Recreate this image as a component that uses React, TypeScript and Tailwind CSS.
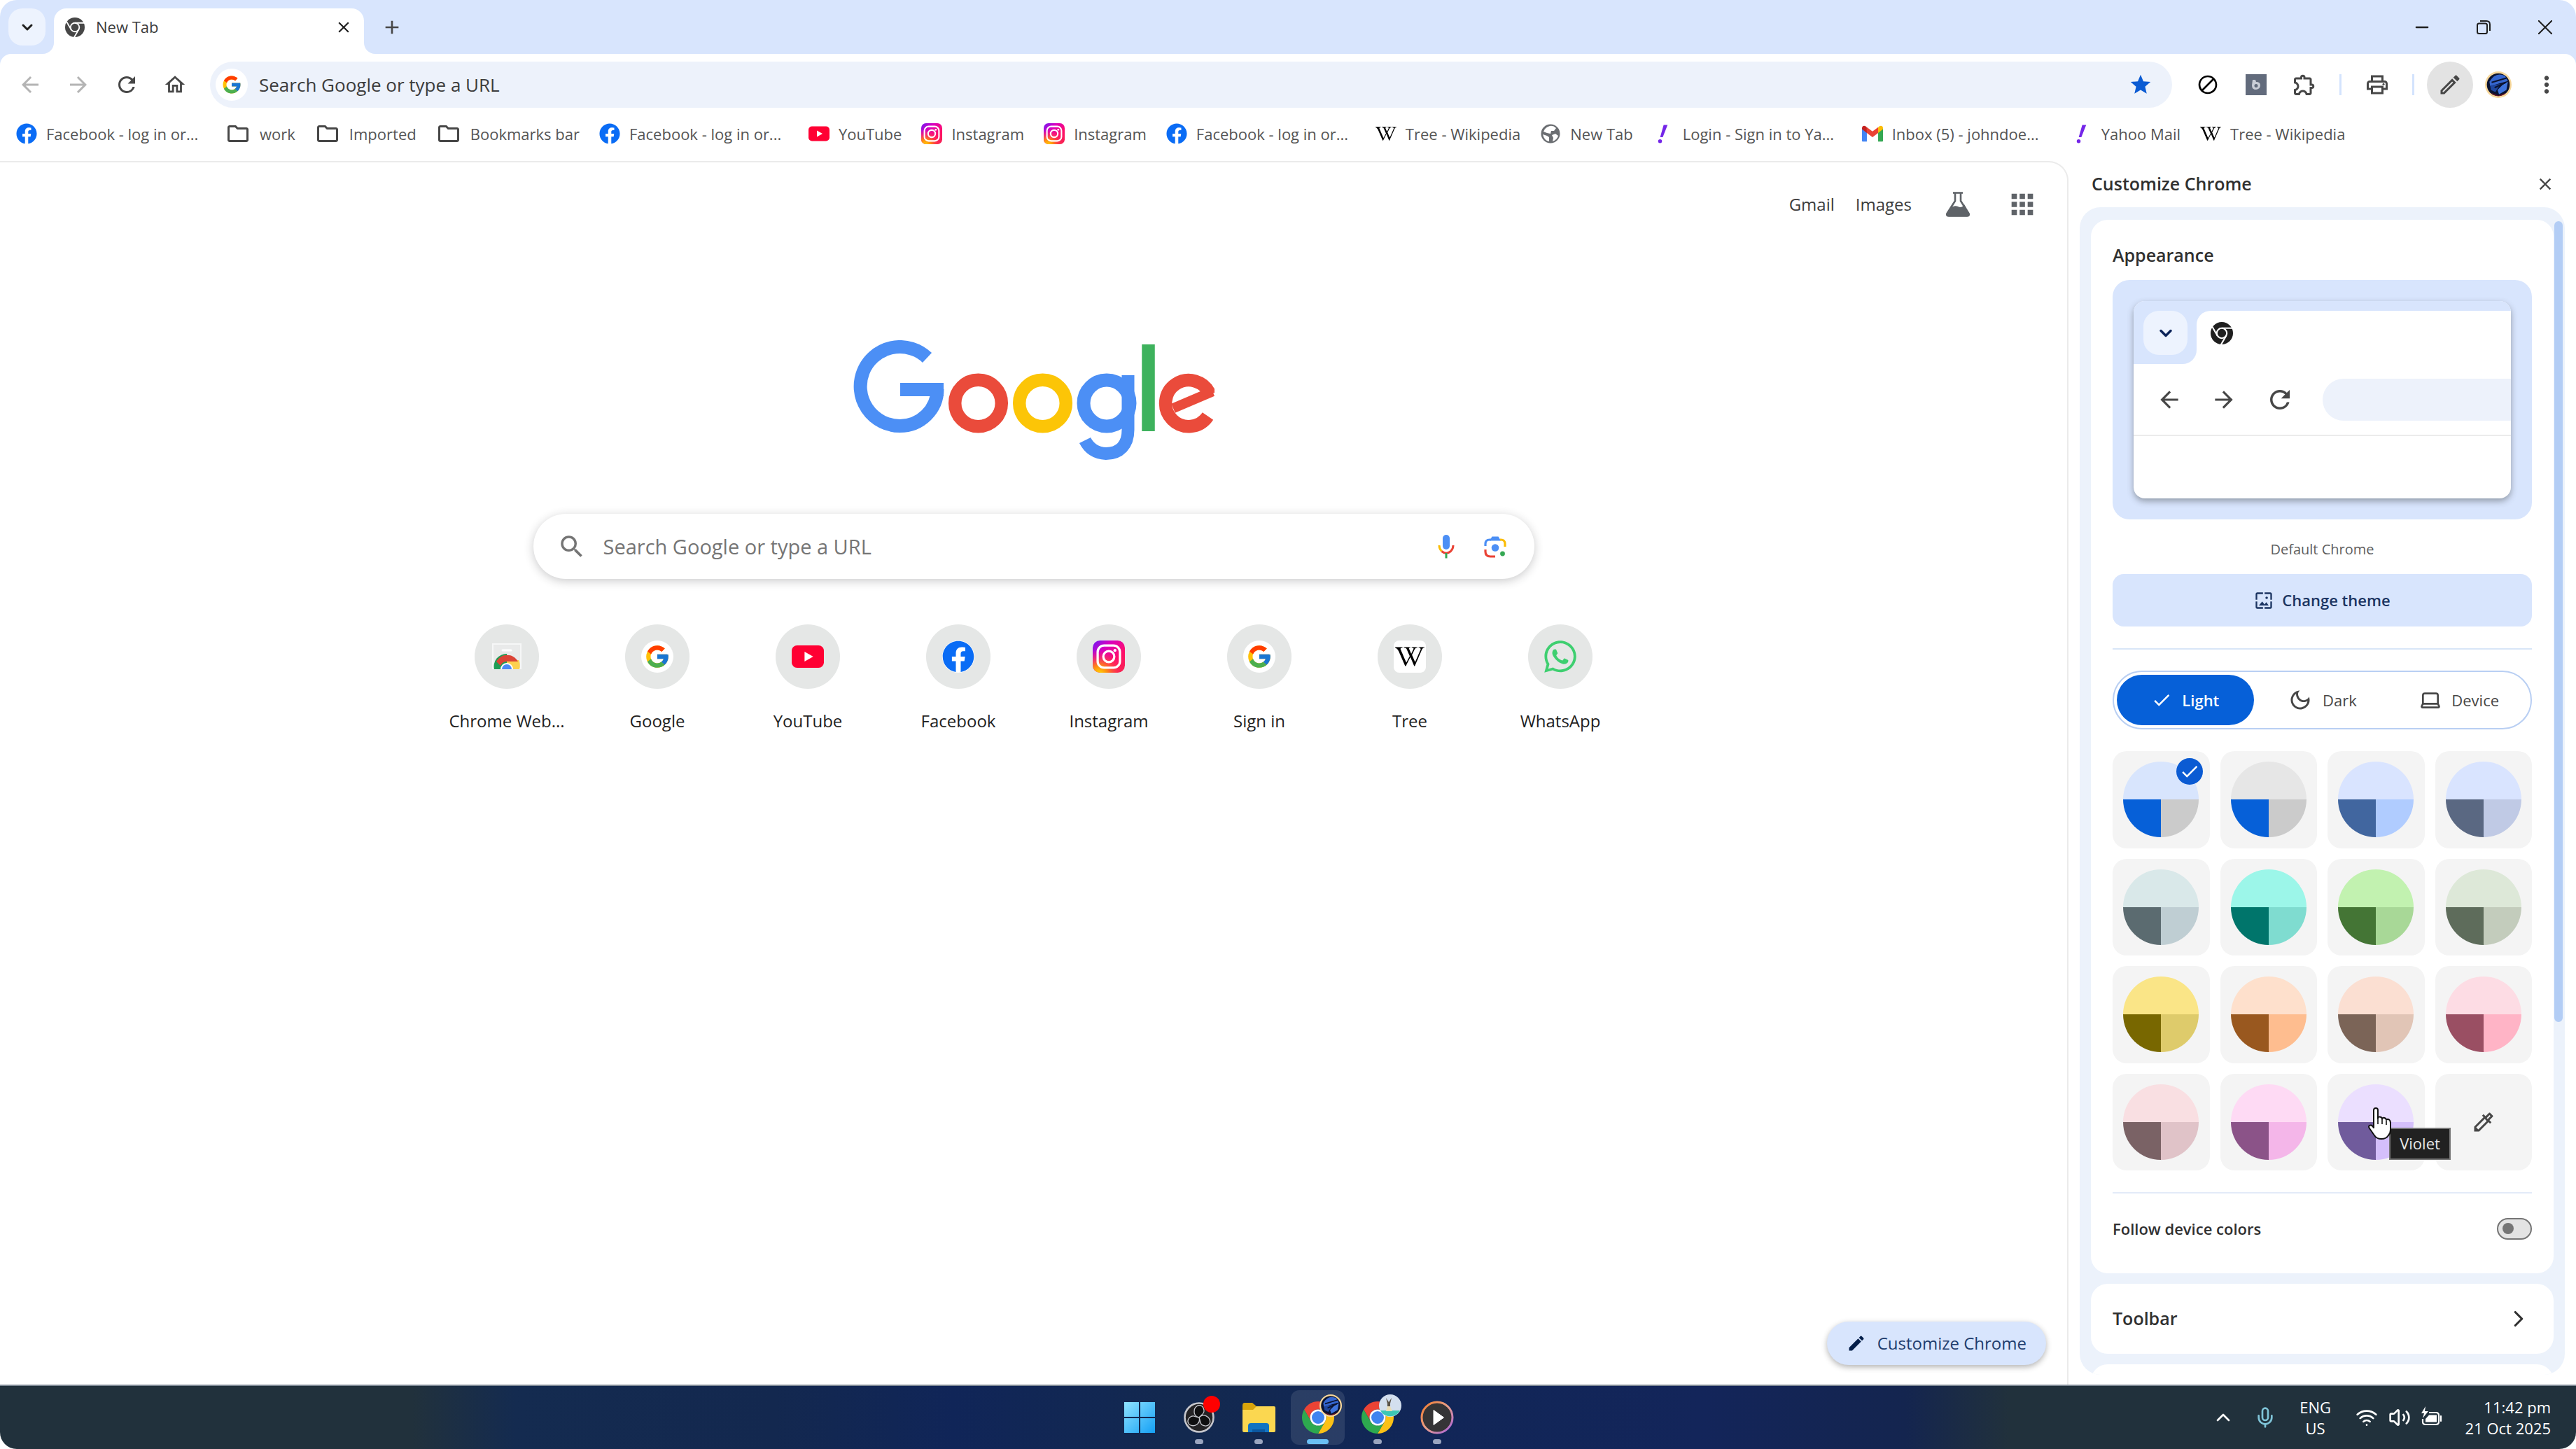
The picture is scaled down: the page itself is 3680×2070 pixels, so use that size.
import React, { useState } from 'react';
import { FcGoogle } from 'react-icons/fc';
import { FaFacebook, FaWhatsapp, FaWikipediaW } from 'react-icons/fa';
import {
  MdAdd,
  MdApps,
  MdArrowBack,
  MdArrowForward,
  MdBlock,
  MdCheck,
  MdClose,
  MdEdit,
  MdMoreVert,
  MdOutlineColorize,
  MdOutlineDarkMode,
  MdOutlineEdit,
  MdOutlineExtension,
  MdOutlineFolder,
  MdOutlineHome,
  MdOutlinePrint,
  MdOutlineWallpaper,
  MdRefresh,
  MdSearch,
  MdStar,
} from 'react-icons/md';
import { ChevronDown, ChevronRight, ChevronUp, Laptop, Mic, Minus, Volume2, Wifi } from 'lucide-react';

const ChromeMono = ({ className }: { className?: string }) => (
  <svg viewBox="0 0 24 24" className={className} fill="none">
    <circle cx="12" cy="12" r="12" fill="currentColor" />
    <g stroke="#fff" strokeWidth="1.6">
      <circle cx="12" cy="12" r="5.4" />
      <path d="M12 6.6H24" />
      <path d="M12 6.6H24" transform="rotate(120 12 12)" />
      <path d="M12 6.6H24" transform="rotate(240 12 12)" />
    </g>
  </svg>
);

const ChromeColor = ({ className }: { className?: string }) => (
  <svg viewBox="2 2 44 44" className={className}>
    <path d="M4.95 13A22 22 0 0 1 43.05 13L24 13A11 11 0 0 0 14.47 29.5Z" fill="#ea4335" />
    <path
      d="M4.95 13A22 22 0 0 1 43.05 13L24 13A11 11 0 0 0 14.47 29.5Z"
      fill="#fbc116"
      transform="rotate(120 24 24)"
    />
    <path
      d="M4.95 13A22 22 0 0 1 43.05 13L24 13A11 11 0 0 0 14.47 29.5Z"
      fill="#2da94f"
      transform="rotate(240 24 24)"
    />
    <circle cx="24" cy="24" r="11" fill="#fff" />
    <circle cx="24" cy="24" r="8.6" fill="#3f84f0" />
  </svg>
);

const InstagramLogo = ({ className }: { className?: string }) => (
  <svg viewBox="0 0 24 24" className={className} fill="none">
    <defs>
      <linearGradient id="ig-base" x1="0" y1="0" x2="1" y2="1">
        <stop offset="0" stopColor="#6a1cf5" />
        <stop offset="0.3" stopColor="#d800c0" />
        <stop offset="0.65" stopColor="#ff0f6b" />
        <stop offset="1" stopColor="#f5264f" />
      </linearGradient>
      <radialGradient id="ig-warm" cx="0.2" cy="1.05" r="0.75">
        <stop offset="0" stopColor="#ffdc00" />
        <stop offset="0.35" stopColor="#ff8a12" />
        <stop offset="1" stopColor="#ff2a55" stopOpacity="0" />
      </radialGradient>
    </defs>
    <rect width="24" height="24" rx="5.5" fill="url(#ig-base)" />
    <rect width="24" height="24" rx="5.5" fill="url(#ig-warm)" />
    <rect x="3.7" y="3.7" width="16.6" height="16.6" rx="4.8" stroke="#fff" strokeWidth="1.7" />
    <circle cx="12" cy="12" r="4.1" stroke="#fff" strokeWidth="1.7" />
    <circle cx="16.6" cy="7.4" r="1.1" fill="#fff" />
  </svg>
);

const YouTubeLogo = ({ className }: { className?: string }) => (
  <svg viewBox="0 0 30 30" className={className}>
    <rect y="4.5" width="30" height="21" rx="5" fill="#ff0033" />
    <path d="M12 10.5L20 15L12 19.5Z" fill="#fff" />
  </svg>
);

const GmailLogo = ({ className }: { className?: string }) => (
  <svg viewBox="0 0 28 28" className={className}>
    <path d="M0 7V23.5Q0 24.5 1 24.5H6.5V11Z" fill="#4285f4" />
    <path d="M28 7V23.5Q28 24.5 27 24.5H21.5V11Z" fill="#34a853" />
    <path d="M21.5 5.5V13L28 8V6.5C28 3.5 25 2.6 23 4.2Z" fill="#fbbc04" />
    <path d="M0 6.5C0 3.5 3 2.6 5 4.2L6.5 5.5V13L0 8Z" fill="#c5221f" />
    <path d="M6.5 5.4L14 11L21.5 5.4V13L14 18.6L6.5 13Z" fill="#ea4335" />
  </svg>
);

const YahooBang = ({ className }: { className?: string }) => (
  <svg viewBox="0 0 24 24" className={className} fill="#7426e8">
    <path d="M12.5 2H17L11.5 16H8.5Z" />
    <circle cx="8.4" cy="20.5" r="2.2" />
  </svg>
);

const Globe = ({ className }: { className?: string }) => (
  <svg viewBox="0 0 30 30" className={className}>
    <circle cx="15" cy="15" r="13.5" fill="#6b6e72" />
    <path d="M14 4Q19 3 23 7L20 11H16L15 15L10 14L5 12Q7 6 14 4Z" fill="#fff" />
    <path d="M4 16L10 18L13 20V26Q6 25 4 16Z" fill="#fff" />
    <path d="M17 17L22 15L26 18Q24 24 18 26L19 21Z" fill="#fff" />
  </svg>
);

const WebStoreLogo = ({ className }: { className?: string }) => (
  <svg viewBox="0 0 46 46" className={className} fill="none">
    <path d="M3 5H43V40H3Z" fill="#e9eaea" stroke="#f6f7f7" strokeWidth="2" />
    <path d="M17 14H29" stroke="#fff" strokeWidth="3" strokeLinecap="round" />
    <path d="M5 41A18 18 0 0 1 23 19V41Z" fill="#1f9d55" />
    <path d="M23 41V28H40A18 18 0 0 1 41 41Z" fill="#fcd14f" />
    <path d="M8 30A18 19 0 0 1 39 30H23A10 10 0 0 0 14 36Z" fill="#db4437" />
    <path d="M14 41A9 9 0 0 1 32 41Z" fill="#fff" />
    <path d="M16 41A7 7 0 0 1 30 41Z" fill="#4c8bf5" />
  </svg>
);

const GoogleLogo = () => (
  <svg viewBox="0 0 516 172" className="w-[516px] h-[172px]" fill="none" role="img" aria-label="Google">
    <g stroke="#4c8ff5" strokeWidth="19">
      <path d="M105.5 25A56.5 56.5 0 1 0 66.5 122.5A53.5 52.5 0 0 0 120 70" />
      <path d="M67 70.5H129" />
      <circle cx="362" cy="90" r="33" />
      <path d="M392.5 50V128C392.5 150 380 162 361 162Q340 161 331 143" strokeWidth="18" />
    </g>
    <circle cx="178.5" cy="90" r="33.3" stroke="#ea4b3b" strokeWidth="18.5" />
    <circle cx="270.5" cy="90" r="33.3" stroke="#fcc507" strokeWidth="18.5" />
    <path d="M421.5 6V130" stroke="#3eb25d" strokeWidth="18.5" />
    <path d="M457 97.3L513.3 73.3" stroke="#ea4b3b" strokeWidth="14" />
    <path d="M509.6 77.6A33 33 0 1 0 506.5 108.5" stroke="#ea4b3b" strokeWidth="18.5" />
  </svg>
);

const Flask = ({ className }: { className?: string }) => (
  <svg viewBox="0 0 36 36" className={className} fill="none" stroke="#5f6368" strokeWidth="2.6">
    <path d="M11 1.5H25" />
    <path d="M14 2V13L2.5 31Q1.5 34.5 5 34.5H31Q34.5 34.5 33.5 31L22 13V2" />
    <path d="M7 25Q13 20 18 22.5T27 20.5L33 31.5Q33.5 34 31 34H5Q2.5 34 3 31.5Z" fill="#5f6368" />
  </svg>
);

const MicColor = () => (
  <svg viewBox="0 0 24 34" className="w-6 h-[34px]" fill="none" strokeWidth="3">
    <rect x="7" y="0" width="10" height="21" rx="5" fill="#4c8ff5" />
    <path d="M2 15C2 19 3.5 21.5 5.5 23.5" stroke="#fbbc04" />
    <path d="M5.5 23.5C9.5 27 14.5 27 18.5 23.5C21 21 22 18.5 22 15" stroke="#ea4335" />
    <path d="M12 26V33.5" stroke="#34a853" />
  </svg>
);

const LensColor = () => (
  <svg viewBox="0 0 32 32" className="w-8 h-8" fill="none" strokeWidth="3.2">
    <path d="M2 15V12Q2 6 8 6H10" stroke="#4c8ff5" />
    <path d="M8 7.5L11.5 1.5H20.5L24 7.5Z" fill="#4c8ff5" />
    <path d="M23 6H24Q30 6 30 12V16" stroke="#fbbc04" />
    <path d="M2 20V23Q2 30 9 30H16" stroke="#ea4335" />
    <circle cx="16" cy="17.5" r="5.3" fill="#4c8ff5" />
    <circle cx="26.5" cy="26" r="3.4" fill="#34a853" />
  </svg>
);

const Helmet = ({ className }: { className?: string }) => (
  <svg viewBox="0 0 36 36" className={className} fill="none">
    <circle cx="18" cy="18" r="18" fill="#f7d79a" />
    <circle cx="18" cy="18" r="15.5" fill="#0b1330" />
    <path d="M6 14Q14 0 27 6L31 13L20 16L7 20Z" fill="#3566cf" />
    <path d="M31 14L29 25L19 31L17 25L24 18Z" fill="#3f74dd" />
    <path d="M7 19L21 17L14 28L8 25Z" fill="#1f479f" />
    <path d="M9 15L29 9M13 22L28 15" stroke="#0b1330" strokeWidth="2" />
    <path d="M8 29Q18 38 29 29L18 33Z" fill="#7d1420" />
  </svg>
);

const Obs = () => (
  <svg viewBox="0 0 44 44" className="w-11 h-11" fill="none">
    <circle cx="22" cy="22" r="20.5" fill="#242325" stroke="#c5c6cc" strokeWidth="2.6" />
    <g fill="#0f0f10" stroke="#c5c6cc" strokeWidth="1.3">
      <path d="M22 22C13 20 13 9 20 5C28 3 32 13 26 18Q24 20 22 22Z" />
      <path d="M22 22C13 20 13 9 20 5C28 3 32 13 26 18Q24 20 22 22Z" transform="rotate(120 22 22)" />
      <path d="M22 22C13 20 13 9 20 5C28 3 32 13 26 18Q24 20 22 22Z" transform="rotate(240 22 22)" />
    </g>
  </svg>
);

const Explorer = () => (
  <svg viewBox="0 0 48 42" className="w-12 h-[42px]">
    <path d="M1 4Q1 0 4 0H15L21 5V12H1Z" fill="#d9a40b" />
    <path d="M1 10H16L21 5H46Q48 5 48 7V40Q48 42 46 42H3Q1 42 1 40Z" fill="#fbd750" />
    <path d="M9 42V33Q9 29 13 29H35Q39 29 39 33V42Z" fill="#1273c2" />
    <path d="M15 42V38H33V42Z" fill="#0b57a0" />
  </svg>
);

const MediaPlayer = () => (
  <svg viewBox="0 0 48 48" className="w-12 h-12">
    <defs>
      <linearGradient id="player-ring" x1="0" y1="0" x2="1" y2="1">
        <stop offset="0" stopColor="#f47b2a" />
        <stop offset="0.5" stopColor="#e8a08c" />
        <stop offset="1" stopColor="#a45fe0" />
      </linearGradient>
    </defs>
    <circle cx="24" cy="24" r="22" fill="#353436" stroke="url(#player-ring)" strokeWidth="3" />
    <path d="M19 13.5L33.5 24L19 34.5Z" fill="#fff" stroke="#fff" strokeLinejoin="round" />
  </svg>
);

const Hand = ({ className }: { className?: string }) => (
  <svg viewBox="0 0 36 48" className={className}>
    <path
      d="M9 28V5Q9 2 12 2T15 5V17Q15 14 18 14.5T21 17.5Q22 15 24.5 16T27 19Q28.5 17 31 18.5Q33 20 33 23V33Q33 38 30 41Q27 46 20 46T10 41L3 31Q1 28 3 27Q6 25 9 30Z"
      fill="#fff"
      stroke="#111"
      strokeWidth="2"
      strokeLinejoin="round"
    />
    <path d="M15 17V25M21 18V25M27 20V26" stroke="#111" strokeWidth="1.6" />
  </svg>
);

const Battery = () => (
  <svg viewBox="0 0 32 32" className="w-8 h-8" fill="none" stroke="#fff" strokeWidth="2.2">
    <path d="M12 9H22Q26 9 26 13V22Q26 26 22 26H7Q3 26 3 22V18" />
    <path d="M29 14V21" strokeLinecap="round" />
    <path d="M12 12.5H23V22.5H7V18Z" fill="#fff" stroke="none" />
    <path d="M7 0L1 10H5L3 17L11 7H6Z" fill="#fff" stroke="none" />
  </svg>
);

const bookmarkIcon = 'w-[30px] h-[30px] shrink-0';

const icons: Record<string, React.ReactNode> = {
  facebook: <FaFacebook className={`${bookmarkIcon} text-[#0a6cf5]`} />,
  folder: <MdOutlineFolder className="w-9 h-9 shrink-0 text-[#474747]" />,
  youtube: <YouTubeLogo className={bookmarkIcon} />,
  instagram: <InstagramLogo className={bookmarkIcon} />,
  wiki: <FaWikipediaW className={`${bookmarkIcon} text-black`} />,
  globe: <Globe className={bookmarkIcon} />,
  yahoo: <YahooBang className={bookmarkIcon} />,
  gmail: <GmailLogo className={bookmarkIcon} />,
};

// long titles are already cut and take the full title width
const bookmarks = [
  { icon: 'facebook', title: 'Facebook - log in or...', long: true },
  { icon: 'folder', title: 'work' },
  { icon: 'folder', title: 'Imported' },
  { icon: 'folder', title: 'Bookmarks bar' },
  { icon: 'facebook', title: 'Facebook - log in or...', long: true },
  { icon: 'youtube', title: 'YouTube' },
  { icon: 'instagram', title: 'Instagram' },
  { icon: 'instagram', title: 'Instagram' },
  { icon: 'facebook', title: 'Facebook - log in or...', long: true },
  { icon: 'wiki', title: 'Tree - Wikipedia' },
  { icon: 'globe', title: 'New Tab' },
  { icon: 'yahoo', title: 'Login - Sign in to Ya...', long: true },
  { icon: 'gmail', title: 'Inbox (5) - johndoe...', long: true },
  { icon: 'yahoo', title: 'Yahoo Mail' },
  { icon: 'wiki', title: 'Tree - Wikipedia' },
];

const GoogleBadge = () => (
  <span className="w-[46px] h-[46px] rounded-full bg-white flex items-center justify-center">
    <FcGoogle className="w-[38px] h-[38px]" />
  </span>
);

const shortcuts = [
  { title: 'Chrome Web...', icon: <WebStoreLogo className="w-[46px] h-[46px]" /> },
  { title: 'Google', icon: <GoogleBadge /> },
  { title: 'YouTube', icon: <YouTubeLogo className="w-[46px] h-[46px]" /> },
  {
    title: 'Facebook',
    icon: (
      <span className="rounded-full bg-white">
        <FaFacebook className="w-[46px] h-[46px] text-[#0a6cf5]" />
      </span>
    ),
  },
  { title: 'Instagram', icon: <InstagramLogo className="w-[46px] h-[46px]" /> },
  { title: 'Sign in', icon: <GoogleBadge /> },
  {
    title: 'Tree',
    icon: (
      <span className="w-[46px] h-[46px] rounded-lg bg-white flex items-center justify-center">
        <FaWikipediaW className="w-[42px] h-[42px] text-black" />
      </span>
    ),
  },
  { title: 'WhatsApp', icon: <FaWhatsapp className="w-[52px] h-[52px] text-[#3ecf70]" /> },
];

const swatches = [
  { name: 'Default', top: '#d8e5fd', left: '#0660d8', right: '#cbcbcb' },
  { name: 'Grey default', top: '#e6e6e6', left: '#0660d8', right: '#cbcbcb' },
  { name: 'Blue', top: '#d9e4ff', left: '#41669f', right: '#b0ccff' },
  { name: 'Cool grey', top: '#d9e4ff', left: '#5a6882', right: '#c0cae5' },
  { name: 'Grey', top: '#d9e8e9', left: '#5b6b70', right: '#bfced3' },
  { name: 'Aqua', top: '#9cf6e9', left: '#00756b', right: '#7fdcd0' },
  { name: 'Green', top: '#c2f2b0', left: '#447535', right: '#a8d897' },
  { name: 'Viridian', top: '#dde8d8', left: '#5e6c5b', right: '#c3ccbc' },
  { name: 'Citron', top: '#fae587', left: '#786700', right: '#decb6b' },
  { name: 'Orange', top: '#fee0cc', left: '#99581f', right: '#febd8f' },
  { name: 'Apricot', top: '#fbdfd2', left: '#7b6457', right: '#e1c5b6' },
  { name: 'Rose', top: '#fddce4', left: '#9a4f63', right: '#ffb4c6' },
  { name: 'Pink', top: '#f9dfe2', left: '#7a6265', right: '#e0c3c8' },
  { name: 'Fuchsia', top: '#fedaf4', left: '#8b5388', right: '#f4b6e9' },
  { name: 'Violet', top: '#ebdfff', left: '#705b9c', right: '#d4bffb' },
];

const Header = () => (
  <header className="bg-white">
    <div className="flex h-[77px]">
      <div className="w-[77px] pl-3 pt-3 bg-[#d8e5fd] rounded-br-2xl">
        <button
          aria-label="Search tabs"
          className="w-[53px] h-[53px] rounded-[20px] bg-[#edf3fe] flex items-center justify-center"
        >
          <ChevronDown className="w-6 h-6 text-[#1f1f1f]" strokeWidth={3} />
        </button>
      </div>
      <div className="w-[443px] pt-3 bg-[#d8e5fd]">
        <div className="h-full pl-4 pr-4 rounded-t-[18px] bg-white flex items-center pb-3">
          <ChromeMono className="w-7 h-7 text-[#474747]" />
          <span className="ml-4 text-[22px] text-[#3c3c3c]">New Tab</span>
          <button aria-label="Close tab" className="ml-auto">
            <MdClose className="w-[26px] h-[26px] text-[#1f1f1f]" />
          </button>
        </div>
      </div>
      <div className="flex-1 flex bg-[#d8e5fd] rounded-bl-2xl text-[#1f1f1f]">
        <button aria-label="New tab" className="ml-6">
          <MdAdd className="w-8 h-8 text-[#474747]" />
        </button>
        <button aria-label="Minimize" className="ml-auto w-[88px] flex items-center justify-center">
          <Minus className="w-7 h-7" strokeWidth={2} />
        </button>
        <button aria-label="Restore" className="w-[88px] flex items-center justify-center">
          <svg viewBox="0 0 20 20" className="w-5 h-5" fill="none" stroke="currentColor" strokeWidth="2">
            <rect x="1" y="4.5" width="14" height="14.5" rx="2.5" />
            <path d="M5 1H14Q19 1 19 6V15" />
          </svg>
        </button>
        <button aria-label="Close" className="w-[88px] flex items-center justify-center">
          <svg viewBox="0 0 20 20" className="w-5 h-5" stroke="currentColor" strokeWidth="2">
            <path d="M0 0L20 20M20 0L0 20" />
          </svg>
        </button>
      </div>
    </div>

    <div className="bg-[#d8e5fd]">
      <div className="flex items-center rounded-t-2xl bg-white px-2 pt-[11px] text-[#474747]">
        <button aria-label="Back" className="w-[69px] flex justify-center text-[#b4b4b4]">
          <MdArrowBack className="w-9 h-9" />
        </button>
        <button aria-label="Forward" className="w-[69px] flex justify-center text-[#b4b4b4]">
          <MdArrowForward className="w-9 h-9" />
        </button>
        <button aria-label="Reload" className="w-[69px] flex justify-center">
          <MdRefresh className="w-9 h-9" />
        </button>
        <button aria-label="Home" className="w-[69px] flex justify-center">
          <MdOutlineHome className="w-[34px] h-[34px]" />
        </button>
        <div className="mx-4 flex-1 h-[66px] rounded-full bg-[#edf2fb] flex items-center pl-2 pr-7">
          <span className="w-[46px] h-[46px] rounded-full bg-white flex items-center justify-center">
            <FcGoogle className="w-[30px] h-[30px]" />
          </span>
          <input
            aria-label="Address bar"
            placeholder="Search Google or type a URL"
            className="ml-4 flex-1 bg-transparent text-[26px] outline-none placeholder:text-[#3c3c3c]"
          />
          <button aria-label="Bookmark this tab">
            <MdStar className="w-[34px] h-[34px] text-[#0b5bd3]" />
          </button>
        </div>
        <button aria-label="Blocker" className="w-[69px] flex justify-center text-black">
          <MdBlock className="w-8 h-8" />
        </button>
        <button aria-label="Extension" className="w-[69px] flex justify-center">
          <svg viewBox="0 0 30 30" className="w-[30px] h-[30px]">
            <rect width="30" height="30" fill="#626b7c" />
            <path d="M10 8H14L15 11Q21 11 21 16T15 22Q9 22 9 16Z" fill="#c9cdd6" />
            <circle cx="15" cy="16.5" r="2.5" fill="#626b7c" />
          </svg>
        </button>
        <button aria-label="Extensions" className="w-[69px] flex justify-center">
          <MdOutlineExtension className="w-9 h-9" />
        </button>
        <span className="mx-4 w-[3px] h-[30px] bg-[#d3e3fd]" />
        <button aria-label="Print" className="w-[69px] flex justify-center">
          <MdOutlinePrint className="w-9 h-9" />
        </button>
        <span className="mx-4 w-[3px] h-[30px] bg-[#d3e3fd]" />
        <button aria-label="Customize" className="w-[69px] flex justify-center">
          <span className="w-[66px] h-[66px] rounded-full bg-[#e3e3e3] flex items-center justify-center">
            <MdOutlineEdit className="w-9 h-9" />
          </span>
        </button>
        <button aria-label="Profile" className="w-[69px] flex justify-center">
          <Helmet className="w-[38px] h-[38px]" />
        </button>
        <button aria-label="Menu" className="w-[69px] flex justify-center">
          <MdMoreVert className="w-[38px] h-[38px]" />
        </button>
      </div>
    </div>

    <nav className="flex items-center gap-7 h-[76px] pl-[23px] pb-0.5 text-[22px] text-[#555]">
      {bookmarks.map((bookmark, i) => (
        <a key={i} href="#" className="flex items-center gap-[13px] whitespace-nowrap">
          {icons[bookmark.icon]}
          <span className={bookmark.long ? 'w-[228px]' : ''}>{bookmark.title}</span>
        </a>
      ))}
    </nav>
  </header>
);

const NewTabPage = () => (
  <main className="flex-1 flex flex-col items-center border-t-2 border-r-2 border-[#ebebeb] rounded-tr-[28px]">
    <nav className="self-stretch flex items-center justify-end h-[92px] mt-3.5 pr-[18px] text-[24px] text-[#3c3c3c]">
      <a href="#">Gmail</a>
      <a href="#" className="ml-[30px] mr-5">
        Images
      </a>
      <button aria-label="Search Labs" className="w-[92px] flex justify-center">
        <Flask className="w-9 h-9" />
      </button>
      <button aria-label="Google apps" className="w-[92px] flex justify-center">
        <MdApps className="w-[46px] h-[46px] text-[#5f6368]" />
      </button>
    </nav>

    <div className="mt-[148px]">
      <GoogleLogo />
    </div>

    <form className="mt-[76px] w-[1430px] h-[93px] pl-[34px] pr-10 rounded-full bg-white shadow-[0_3px_14px_rgba(32,33,36,0.24)] flex items-center">
      <MdSearch className="w-[42px] h-[42px] text-[#757575]" />
      <input
        aria-label="Search"
        placeholder="Search Google or type a URL"
        className="ml-6 flex-1 h-full text-[29px] outline-none placeholder:text-[#757575]"
      />
      <button type="button" aria-label="Search by voice" className="mr-[42px]">
        <MicColor />
      </button>
      <button type="button" aria-label="Search by image">
        <LensColor />
      </button>
    </form>

    <div className="mt-[65px] flex">
      {shortcuts.map((shortcut) => (
        <a key={shortcut.title} href="#" className="w-[215px] flex flex-col items-center">
          <span className="w-[92px] h-[92px] rounded-full bg-[#e5e7e6] flex items-center justify-center">
            {shortcut.icon}
          </span>
          <span className="mt-7 text-[24px] leading-9 text-[#1f1f1f]">{shortcut.title}</span>
        </a>
      ))}
    </div>

    <button className="mt-auto mb-7 mr-[30px] self-end h-[62px] px-7 rounded-full bg-[#d8e5fd] shadow-[0_3px_8px_rgba(0,0,0,0.3)] flex items-center gap-4 text-[24px] text-[#1f3d6e]">
      <MdEdit className="w-7 h-7 text-[#041e49]" />
      Customize Chrome
    </button>
  </main>
);

const ThemePreview = () => (
  <div className="mt-[18px] h-[342px] p-[30px] rounded-3xl bg-[#d8e5fd]">
    <div className="h-full flex flex-col rounded-2xl overflow-hidden bg-white shadow-[0_4px_10px_rgba(60,64,67,0.45)]">
      <div className="h-3.5 bg-[#d8e5fd]" />
      <div className="flex h-[76px]">
        <div className="w-[90px] pl-3.5 bg-[#d8e5fd] rounded-br-[20px]">
          <span className="w-[63px] h-[63px] rounded-[22px] bg-[#edf3fe] flex items-center justify-center">
            <ChevronDown className="w-7 h-7 text-[#0b2359]" strokeWidth={3} />
          </span>
        </div>
        <div className="flex-1 bg-[#d8e5fd]">
          <div className="h-full rounded-tl-[20px] bg-white pl-5 pt-4">
            <ChromeMono className="w-8 h-8 text-[#1f1f1f]" />
          </div>
        </div>
      </div>
      <div className="flex items-center h-[103px] pl-8 text-[#474747] border-b-2 border-[#ebebeb]">
        <MdArrowBack className="w-[38px] h-[38px]" />
        <MdArrowForward className="w-[38px] h-[38px] ml-10" />
        <MdRefresh className="w-[42px] h-[42px] ml-10" />
        <span className="ml-10 flex-1 h-[60px] rounded-l-full bg-[#edf2fb]" />
      </div>
    </div>
  </div>
);

const modes = [
  { name: 'Light', icon: <MdCheck className="w-[30px] h-[30px]" /> },
  { name: 'Dark', icon: <MdOutlineDarkMode className="w-9 h-9 -rotate-12" /> },
  { name: 'Device', icon: <Laptop className="w-8 h-8" /> },
];

const SidePanel = () => {
  const [mode, setMode] = useState('Light');
  const [color, setColor] = useState('Default');
  const [follow, setFollow] = useState(false);

  return (
    <aside className="w-[725px] flex flex-col bg-white text-[#303030]">
      <div className="flex items-center justify-between h-[66px] shrink-0 pl-[33px] pr-[30px]">
        <h2 className="text-[25px] font-semibold">Customize Chrome</h2>
        <button aria-label="Close side panel">
          <MdClose className="w-7 h-7 text-[#474747]" />
        </button>
      </div>

      <div className="relative flex-1 min-h-0 mx-4 mb-3.5 px-4 pt-[18px] rounded-[30px] bg-[#ecf2fb] overflow-hidden flex flex-col gap-[15px]">
        <div className="absolute top-5 right-[3px] w-3 h-[1144px] rounded-full bg-[#b3cdf5]" />

        <section className="shrink-0 rounded-3xl bg-white px-[31px] pt-8 pb-3.5">
          <h3 className="text-[25px] leading-9 font-semibold">Appearance</h3>
          <ThemePreview />
          <p className="mt-7 text-center text-[20px] leading-[30px] text-[#5f5f5f]">Default Chrome</p>
          <button className="mt-5 w-full h-[75px] rounded-2xl bg-[#d8e5fd] flex items-center justify-center gap-3 text-[22px] font-semibold text-[#1c3562]">
            <MdOutlineWallpaper className="w-7 h-7" />
            Change theme
          </button>

          <hr className="mt-[31px] border-t-2 border-[#d8e6f8]" />

          <div className="mt-[30px] h-[84px] p-1 rounded-full border-2 border-[#b9cff3] grid grid-cols-3">
            {modes.map((item) => (
              <label
                key={item.name}
                className={`relative rounded-full flex items-center justify-center gap-3.5 text-[22px] ${
                  item.name === mode ? 'bg-[#0660d8] text-white font-semibold' : 'text-[#474747]'
                }`}
              >
                <input
                  type="radio"
                  name="mode"
                  className="sr-only"
                  checked={item.name === mode}
                  onChange={() => setMode(item.name)}
                />
                {item.icon}
                {item.name}
              </label>
            ))}
          </div>

          <div className="mt-[31px] grid grid-cols-4 gap-[15px]">
            {swatches.map((swatch) => (
              <label
                key={swatch.name}
                className="relative aspect-square rounded-[20px] bg-[#f4f4f4] flex items-center justify-center"
              >
                <input
                  type="radio"
                  name="color"
                  aria-label={swatch.name}
                  className="sr-only"
                  checked={swatch.name === color}
                  onChange={() => setColor(swatch.name)}
                />
                <svg viewBox="0 0 108 108" className="w-[108px] h-[108px]">
                  <path d="M0 54A54 54 0 0 1 108 54Z" fill={swatch.top} />
                  <path d="M0 54A54 54 0 0 0 54 108V54Z" fill={swatch.left} />
                  <path d="M108 54A54 54 0 0 1 54 108V54Z" fill={swatch.right} />
                </svg>
                {swatch.name === color && (
                  <span className="absolute top-2.5 right-2.5 w-[38px] h-[38px] rounded-full bg-[#0b5bd3] flex items-center justify-center">
                    <MdCheck className="w-[30px] h-[30px] text-white" />
                  </span>
                )}
                {swatch.name === 'Violet' && (
                  <>
                    <span className="absolute z-10 top-[77px] left-[88px] w-[88px] h-[46px] border-2 border-[#767676] bg-[#212121] flex items-center justify-center text-[22px] text-[#e8e8e8]">
                      Violet
                    </span>
                    <Hand className="absolute z-20 top-[47px] left-[57px] w-9 h-12" />
                  </>
                )}
              </label>
            ))}
            <button
              aria-label="Custom color"
              className="aspect-square rounded-[20px] bg-[#f4f4f4] flex items-center justify-center"
            >
              <MdOutlineColorize className="w-9 h-9 text-[#474747]" />
            </button>
          </div>

          <hr className="mt-[31px] border-t-2 border-[#e3ebf8]" />

          <label className="flex items-center justify-between h-[100px] text-[22px] font-semibold">
            Follow device colors
            <input
              type="checkbox"
              role="switch"
              className="sr-only"
              checked={follow}
              onChange={() => setFollow(!follow)}
            />
            <span className="w-[50px] h-[31px] pl-1.5 rounded-full border-2 border-[#757575] bg-[#e3e3e3] flex items-center">
              <span className="w-4 h-4 rounded-full bg-[#757575]" />
            </span>
          </label>
        </section>

        <section className="shrink-0 rounded-3xl bg-white">
          <button className="w-full h-[100px] px-[31px] flex items-center justify-between text-[25px] font-semibold">
            Toolbar
            <ChevronRight className="w-[38px] h-[38px]" />
          </button>
        </section>

        <section className="shrink-0 h-[100px] rounded-3xl bg-white" />
      </div>
    </aside>
  );
};

const Dot = () => <span className="absolute bottom-[1px] w-3 h-[7px] rounded-full bg-[#9aa5bf]" />;

const Taskbar = () => (
  <footer className="h-[92px] shrink-0 grid grid-cols-[1fr_auto_1fr] items-center border-t-2 border-[#7d8894] text-white bg-[linear-gradient(90deg,#21313c_0%,#21313c_16%,#142b50_20%,#13284f_30%,#102558_37%,#13294f_46%,#112657_55%,#13255a_66%,#14254f_74%,#21313c_78%,#21313c_100%)]">
    <span />
    <div className="flex">
      <button aria-label="Start" className="relative w-[85px] h-[78px] flex items-center justify-center">
        <svg viewBox="0 0 44 44" className="w-11 h-11">
          <defs>
            <linearGradient id="win" x1="0" y1="0" x2="44" y2="44" gradientUnits="userSpaceOnUse">
              <stop offset="0" stopColor="#8fe3ff" />
              <stop offset="1" stopColor="#14a0f5" />
            </linearGradient>
          </defs>
          <path d="M0 0H21V21H0ZM23 0H44V21H23ZM0 23H21V44H0ZM23 23H44V44H23Z" fill="url(#win)" />
        </svg>
      </button>
      <button aria-label="OBS Studio" className="relative w-[85px] h-[78px] flex items-center justify-center">
        <Obs />
        <span className="absolute top-2 right-3 w-6 h-6 rounded-full bg-[#ff0000]" />
        <Dot />
      </button>
      <button aria-label="File Explorer" className="relative w-[85px] h-[78px] flex items-center justify-center">
        <Explorer />
        <Dot />
      </button>
      <button
        aria-label="Chrome"
        className="relative mx-1 w-[77px] h-[78px] rounded-xl bg-white/10 flex items-center justify-center"
      >
        <ChromeColor className="w-[46px] h-[46px]" />
        <Helmet className="absolute top-1.5 right-1 w-8 h-8" />
        <span className="absolute bottom-[1px] w-[31px] h-[7px] rounded-full bg-[#6ac0f5]" />
      </button>
      <button aria-label="Chrome profile 2" className="relative w-[85px] h-[78px] flex items-center justify-center">
        <ChromeColor className="w-[46px] h-[46px]" />
        <svg viewBox="0 0 32 32" className="absolute top-1.5 right-2 w-8 h-8">
          <circle cx="16" cy="16" r="16" fill="#d3dfee" />
          <path d="M2 23H30A16 16 0 0 1 2 23Z" fill="#3cc7b5" />
          <path d="M10 5L14 11L18 5L16 13V19H12V13Z" fill="#5a5348" />
          <path d="M12 17H16L19 24H10Z" fill="#e8dcb6" />
        </svg>
        <Dot />
      </button>
      <button aria-label="Media Player" className="relative w-[85px] h-[78px] flex items-center justify-center">
        <MediaPlayer />
        <Dot />
      </button>
    </div>

    <div className="flex items-center justify-end pr-9 text-[22px] leading-[30px]">
      <button aria-label="Show hidden icons" className="w-[60px] flex justify-center">
        <ChevronUp className="w-8 h-8" />
      </button>
      <button aria-label="Microphone" className="w-[60px] flex justify-center">
        <Mic className="w-8 h-8 text-[#7fc4d8]" />
      </button>
      <div className="w-[84px] text-center">
        ENG
        <br />
        US
      </div>
      <div className="flex w-[140px] mx-2 justify-around">
        <Wifi className="w-8 h-8" />
        <Volume2 className="w-8 h-8" />
        <Battery />
      </div>
      <div className="ml-4 text-right">
        11:42 pm
        <br />
        21 Oct 2025
      </div>
    </div>
  </footer>
);

export default function App() {
  return (
    <div className="h-screen flex flex-col rounded-3xl overflow-hidden bg-white font-['Open_Sans',sans-serif]">
      <Header />
      <div className="flex-1 min-h-0 flex">
        <NewTabPage />
        <SidePanel />
      </div>
      <Taskbar />
    </div>
  );
}
